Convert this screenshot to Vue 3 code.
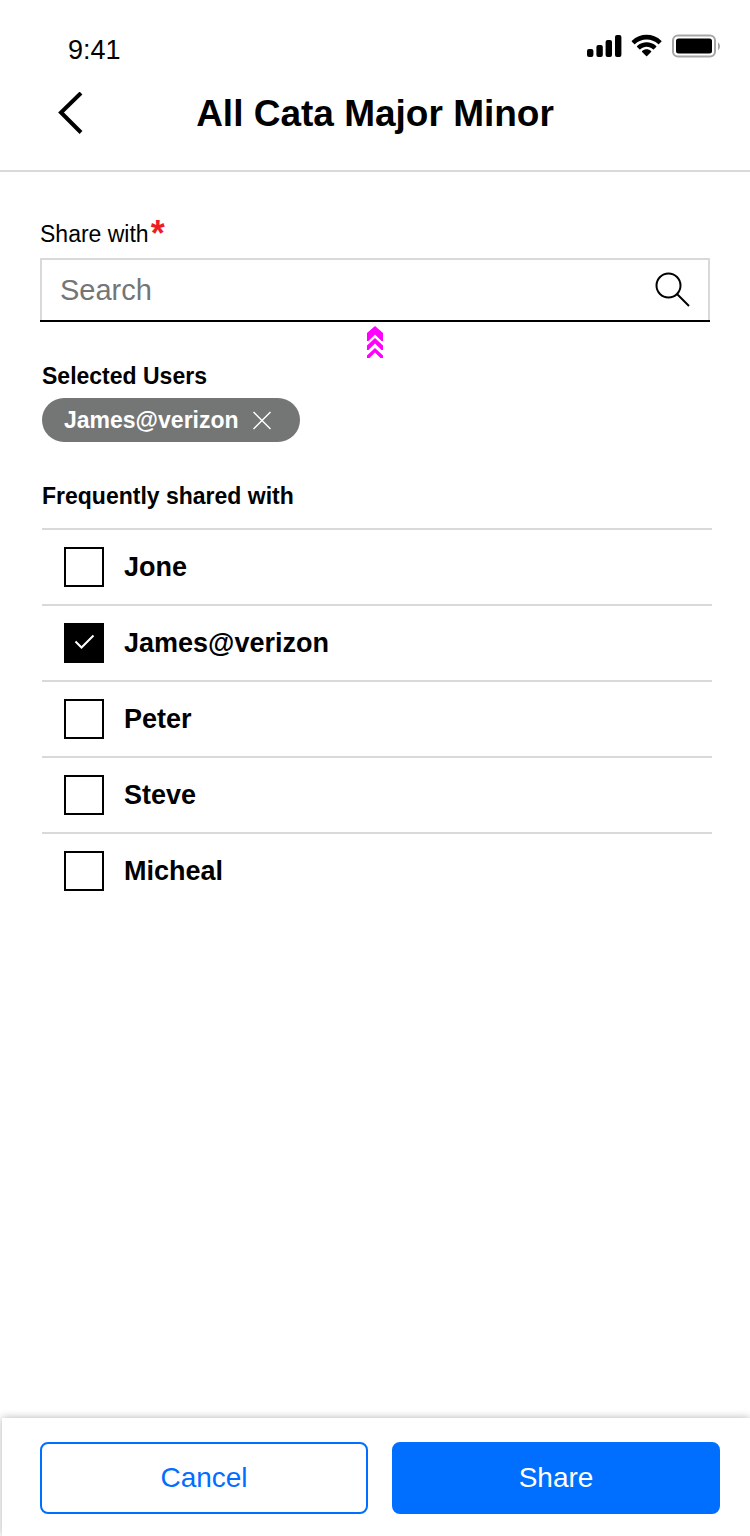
<script setup>
import { ref } from 'vue'

const query = ref('')
const users = ref([
  { id: 'jone', name: 'Jone', selected: false },
  { id: 'james', name: 'James@verizon', selected: true },
  { id: 'peter', name: 'Peter', selected: false },
  { id: 'steve', name: 'Steve', selected: false },
  { id: 'micheal', name: 'Micheal', selected: false },
])
</script>

<template>
  <div class="screen">
    <div class="status">
      <span class="time">9:41</span>
      <div class="indicators">
        <svg width="36" height="24" viewBox="0 0 36 24" aria-hidden="true">
          <rect x="1" y="15" width="6.4" height="8" rx="2" />
          <rect x="10.4" y="11" width="6.4" height="12" rx="2" />
          <rect x="19.6" y="6" width="6.4" height="17" rx="2" />
          <rect x="29" y="1" width="6.4" height="22" rx="2" />
        </svg>
        <svg width="32" height="24" viewBox="0 0 32 24" aria-hidden="true">
          <path transform="translate(.6 0)" d="M16 5.4c4.3 0 8.4 1.6 11.5 4.6.3.3.6.3.9 0l2.3-2.3c.3-.3.3-.7 0-1C22.5-1.2 9.5-1.2 1.3 6.7c-.3.3-.3.7 0 1L3.6 10c.3.3.6.3.9 0C7.600 7 11.7 5.4 16 5.4z" />
          <path transform="translate(.6 0)" d="M16 12.8c2.4 0 4.6.9 6.4 2.5.3.3.6.3.9 0l2.3-2.3c.3-.3.3-.7 0-1-5.4-5-13.7-5-19.100 0-.3.3-.3.7 0 1l2.300 2.300c.3.3.6.3.9 0 1.700-1.600 4-2.500 6.300-2.500z" />
          <path transform="translate(.6 0)" d="M20.500 17.900c.3-.3.3-.8 0-1-2.600-2.200-6.400-2.200-9 0-.3.3-.3.700 0 1l4 4c.3.3.7.3 1 0z" />
        </svg>
        <svg class="battery" width="50" height="24" viewBox="0 0 50 24" aria-hidden="true">
          <rect x="1" y="1.500" width="42" height="21" rx="5" fill="none" stroke="#a6a6a6" stroke-width="2" />
          <rect x="4" y="4.500" width="36" height="15" rx="2.500" />
          <path d="M46 8.500c2.600 1 2.600 6.500 0 7.500z" fill="#a6a6a6" />
        </svg>
      </div>
    </div>

    <header class="header">
      <button class="back" type="button" aria-label="Back">
        <svg width="28" height="44" viewBox="0 0 28 44" aria-hidden="true">
          <path d="M25 1L5 20.500L25 40.500" fill="none" stroke="#000" stroke-width="4" />
        </svg>
      </button>
      <h1>All Cata Major Minor</h1>
    </header>

    <main>
      <label class="field-label" for="search">Share with<span class="required">*</span></label>
      <div class="search">
        <input id="search" v-model="query" type="text" placeholder="Search" />
        <button class="find" type="button" aria-label="Search">
          <svg width="36" height="36" viewBox="0 0 36 36" fill="none" stroke="#000" stroke-width="2" aria-hidden="true">
            <circle cx="14.500" cy="13.500" r="12" />
            <path d="M23 22L35 34" />
          </svg>
        </button>
      </div>
      <svg class="chevrons" width="18" height="32" viewBox="0 0 18 32" fill="#f0f" aria-hidden="true">
        <path d="M9 0l8 7v8h-1.500L9 8.500 2.500 15H1V7z" />
        <path d="M9 12l8 7.500v4.500h-1.500L9 17.500 2.500 24H1v-4.500z" />
        <path d="M9 22l8 7.500V32h-2.500L9 26.500 3.500 32H1v-2.500z" />
      </svg>

      <section class="group">
        <h2>Selected Users</h2>
        <div class="chip">
          <span>James@verizon</span>
          <button type="button" aria-label="Remove James@verizon">
            <svg width="20" height="20" viewBox="0 0 20 20" fill="none" stroke="#fff" stroke-width="1.400" aria-hidden="true">
              <path d="M1.500 2l17 17M18.500 2l-17 17" />
            </svg>
          </button>
        </div>
      </section>

      <section class="group frequent">
        <h2>Frequently shared with</h2>
        <ul>
          <li v-for="user in users" :key="user.id">
            <label :for="user.id">
              <span class="box">
                <input :id="user.id" v-model="user.selected" type="checkbox" />
                <svg v-if="user.selected" width="40" height="40" viewBox="0 0 40 40" fill="none" stroke="#fff" stroke-width="2" aria-hidden="true">
                  <path d="M11.500 18.500l6 6L29.500 12.500" />
                </svg>
              </span>
              {{ user.name }}
            </label>
          </li>
        </ul>
      </section>
    </main>

    <footer class="actions">
      <button class="cancel" type="button">Cancel</button>
      <button class="share" type="button">Share</button>
    </footer>
  </div>
</template>

<style>
body {
  background: #fff;
}
</style>

<style scoped>
* {
  box-sizing: border-box;
}

.screen {
  display: flex;
  flex-direction: column;
  min-height: 100vh;
  overflow: hidden;
  color: #000;
  background: #fff;
  font-family: "Liberation Sans", Arial, sans-serif;
}

button,
input {
  margin: 0;
  padding: 0;
  border: 0;
  background: none;
  font-family: inherit;
}

button {
  cursor: pointer;
}

svg {
  display: block;
}

h1,
h2,
ul {
  margin: 0;
  padding: 0;
}

.status {
  display: flex;
  justify-content: space-between;
  align-items: flex-start;
  padding: 34px 28px 0 68px;
}

.time {
  font-size: 27px;
  line-height: 32px;
}

.indicators {
  display: flex;
  gap: 8px;
}

.battery {
  margin-left: 2px;
}

.header {
  display: grid;
  grid-template-columns: 56px 1fr 56px;
  align-items: center;
  height: 106px;
  padding: 0 56px 8px;
  border-bottom: 2px solid #d8dada;
}

.back {
  justify-self: start;
}

h1 {
  font-size: 37px;
  line-height: 48px;
  text-align: center;
  white-space: nowrap;
}

main {
  flex: 1;
  padding: 44px 40px 40px;
}

.field-label {
  display: flex;
  gap: 2px;
  height: 42px;
  font-size: 23px;
  line-height: 36px;
}

.required {
  color: #ee1c25;
  font-size: 36px;
  font-weight: 700;
}

.search {
  display: flex;
  align-items: center;
  height: 64px;
  padding: 2px 20px 0;
  border-bottom: 2px solid #000;
  box-shadow: inset 2px 2px #d8dada, inset -2px 0 #d8dada;
}

.search input {
  flex: 1;
  min-width: 0;
  color: #000;
  font-size: 29px;
  line-height: 36px;
}

.search input::placeholder {
  color: #747676;
  opacity: 1;
}

.chevrons {
  margin: 4px auto 2px;
}

.group {
  margin: 0 -2px 0 2px;
}

h2 {
  font-size: 23px;
  line-height: 32px;
}

.chip {
  display: inline-flex;
  align-items: center;
  gap: 13px;
  height: 44px;
  margin-top: 6px;
  padding: 0 28px 0 22px;
  border-radius: 22px;
  color: #fff;
  background: #747676;
  font-size: 23px;
  font-weight: 700;
}

.frequent {
  margin-top: 38px;
}

ul {
  margin-top: 16px;
  list-style: none;
}

li {
  border-top: 2px solid #d8dada;
}

li label {
  display: flex;
  align-items: center;
  gap: 20px;
  height: 74px;
  padding-left: 22px;
  font-size: 27px;
  font-weight: 700;
}

.box {
  display: grid;
}

.box > * {
  grid-area: 1 / 1;
  pointer-events: none;
}

.box input {
  width: 40px;
  height: 40px;
  border: 2px solid #000;
  appearance: none;
}

.box input:checked {
  background: #000;
}

.actions {
  display: grid;
  grid-template-columns: 1fr 1fr;
  gap: 24px;
  margin-left: 2px;
  padding: 24px 30px 22px 38px;
  background: #fff;
  box-shadow: 0 0 8px rgba(0, 0, 0, 0.3);
}

.actions button {
  height: 72px;
  border: 2px solid #006fff;
  border-radius: 8px;
  font-size: 28px;
}

.cancel {
  color: #006fff;
}

.share {
  color: #fff;
  background: #006fff;
}
</style>
